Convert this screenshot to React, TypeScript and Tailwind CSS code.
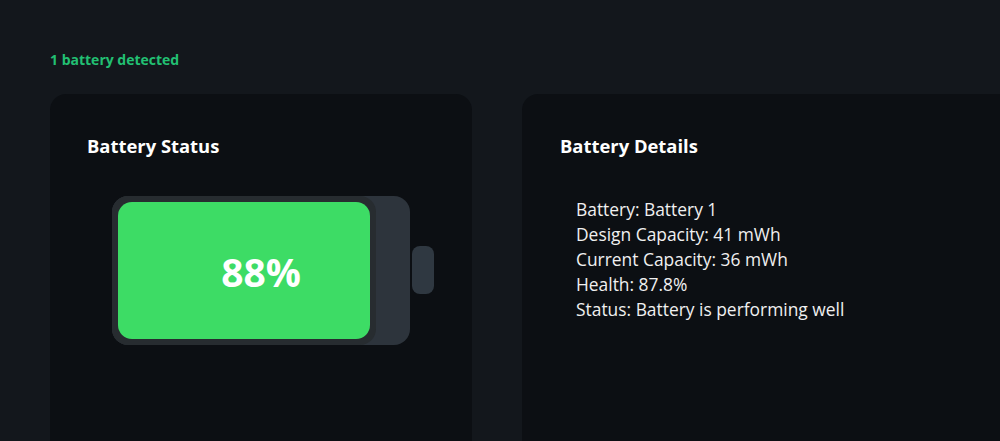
function Battery() {
  return (
    <div className="ml-[25px] mt-[37px] flex items-center">
      <div className="relative h-[149px] w-[298px] rounded-[16px] bg-[#2d343c]">
        <div className="h-full w-[264px] rounded-[16px] bg-[#272c30] p-[6px]">
          <div className="h-full w-[252px] rounded-[14px] bg-[#3ddc65]" />
        </div>
        <span className="absolute inset-0 flex items-center justify-center pt-[4px] text-[39px] font-bold text-white">
          88%
        </span>
      </div>
      <div className="mb-[2px] ml-[2px] h-[48px] w-[22px] rounded-[8px] bg-[#2f3841]" />
    </div>
  );
}

export default function App() {
  return (
    <main className="h-[441px] w-[1000px] overflow-hidden bg-[#13171c] pl-[50px] pt-[50px] font-['Open_Sans','Noto_Sans',sans-serif]">
      <p className="text-[14px] leading-[19px] font-bold text-[#22c073]">1 battery detected</p>
      <div className="mt-[25px] flex gap-[50px]">
        <section className="h-[400px] w-[422px] shrink-0 rounded-[16px] bg-[#0c0f13] px-[37px] pt-[39px]">
          <h2 className="text-[18.4px] leading-[26px] font-bold text-white">Battery Status</h2>
          <Battery />
        </section>
        <section className="h-[400px] w-[600px] shrink-0 rounded-[16px] bg-[#0c0f13] px-[38px] pt-[39px]">
          <h2 className="text-[18.4px] leading-[26px] font-bold text-white">Battery Details</h2>
          <div className="mt-[38px] pl-[16px] text-[17.4px] leading-[25px] text-[#f0f0f0]">
            <p>Battery: Battery 1</p>
            <p>Design Capacity: 41 mWh</p>
            <p>Current Capacity: 36 mWh</p>
            <p>Health: 87.8%</p>
            <p>Status: Battery is performing well</p>
          </div>
        </section>
      </div>
    </main>
  );
}
